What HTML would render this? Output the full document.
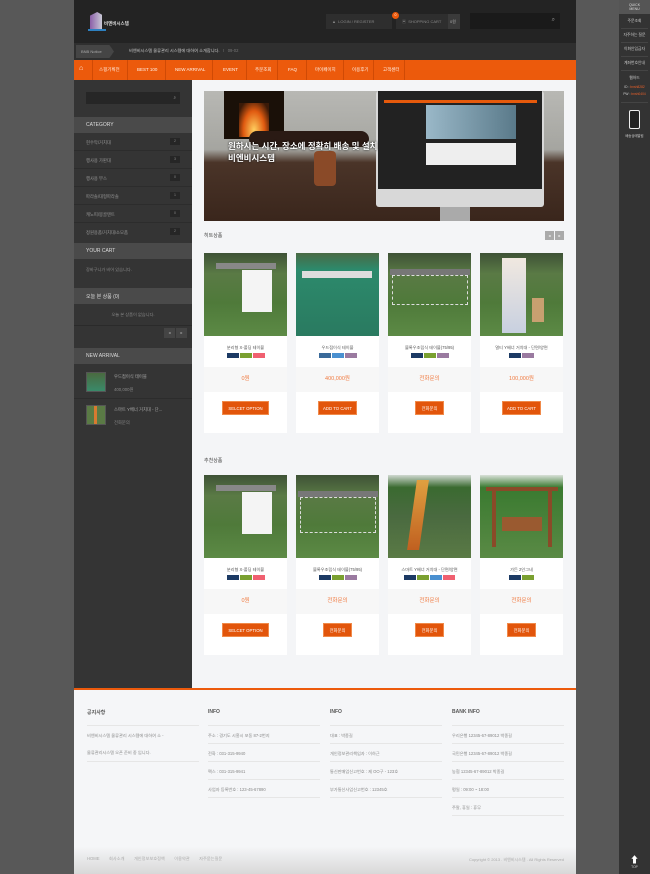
<!DOCTYPE html>
<html><head><meta charset="utf-8"><style>
*{margin:0;padding:0;box-sizing:border-box}
body{width:650px;height:874px;overflow:hidden;background:#585858;font-family:"Liberation Sans","Noto Sans CJK KR",sans-serif;font-size:5px;color:#888;position:relative}
.a{position:absolute}
.wrap{position:absolute;left:74px;top:0;width:502px;height:874px}
.hdr{left:0;top:0;width:502px;height:43px;background:#232323}
.ntc{left:0;top:43px;width:502px;height:17px;background:#2f2f2f}
.nav{left:0;top:60px;width:502px;height:20px;background:#ec5a0c}
.nav span{position:absolute;top:7px;color:#fde;font-size:4.5px;color:#fff3ea}
.nav i{position:absolute;top:0;width:1px;height:20px;background:#d04a05}
.side{left:0;top:80px;width:118px;height:608px;background:#343434}
.main{left:118px;top:80px;width:384px;height:608px;background:#f4f5f7}
.sh{position:absolute;left:0;width:118px;height:16px;background:#4a4a4a;color:#ddd;font-size:5px;padding:5px 0 0 12px}
.ci{position:absolute;left:0;width:118px;height:18px;border-bottom:1px solid #2c2c2c;color:#999;font-size:4.3px;padding:7px 0 0 12px}
.ci b{position:absolute;right:12px;top:5px;width:10px;height:7px;background:#262626;color:#888;font-size:3.5px;text-align:center;line-height:7px;font-weight:normal}
.card{position:absolute;width:83px;background:#fff;height:180px}
.img{position:absolute;left:0;top:0;width:83px;height:83px;background:linear-gradient(#3e5236 0,#5a7a45 25%,#4f7a3a 60%,#5c8a45 100%)}
.nm{position:absolute;top:92px;width:83px;text-align:center;color:#555;font-size:4.2px}
.bd{position:absolute;top:100px;width:83px;text-align:center;font-size:0}
.bd s{display:inline-block;width:12px;height:5px;margin:0 .5px;text-decoration:none}
.pr{position:absolute;top:114px;width:83px;height:25px;background:#f7f7f7;text-align:center;color:#f07a40;font-size:5.5px;line-height:25px}
.bt{position:absolute;top:148px;height:14px;background:#e2550b;color:#fff;font-size:4.3px;text-align:center;line-height:14px;border:1px solid #f08a4a}
.ft{left:0;top:688px;width:502px;height:186px;background:linear-gradient(#f5f6f8 0,#f5f6f8 85%,#d8d8d8 100%);border-top:2px solid #ec5a0c}
.fc{position:absolute;top:0;width:112px}
.fc h4{position:absolute;top:19px;font-size:5px;color:#555;font-weight:bold}
.fc p{position:absolute;left:0;width:112px;height:18px;border-top:1px solid #e6e6e6;font-size:4.2px;color:#888;padding-top:7px}
.qm{left:619px;top:0;width:31px;height:874px;background:#333}
.qm div{position:absolute;left:0;width:31px;text-align:center;font-size:3.8px;color:#ccc}
.ql{position:absolute;left:2px;width:27px;height:1px;background:#444}
</style></head><body>
<div class="wrap">
<div class="a hdr">
 <div class="a" style="left:16px;top:12px;width:12px;height:18px;background:linear-gradient(90deg,#8b5fa8,#c9c9d6);clip-path:polygon(0 20%,60% 0,100% 15%,100% 100%,0 100%)"></div>
 <div class="a" style="left:14px;top:29px;width:18px;height:2px;background:#2d80c0"></div>
 <div class="a" style="left:30px;top:21px;color:#ddd;font-size:4.5px;font-weight:bold">비엔비시스템</div>
 <div class="a" style="left:252px;top:14px;width:66px;height:15px;background:#2e2e2e;color:#888;font-size:4px;padding:5px 0 0 6px">▲&nbsp; LOGIN / REGISTER</div>
 <div class="a" style="left:322px;top:14px;width:52px;height:15px;background:#2e2e2e;color:#888;font-size:4px;padding:5px 0 0 6px">▣&nbsp; SHOPPING CART</div>
 <div class="a" style="left:374px;top:14px;width:12px;height:15px;background:#3a3a3a;color:#aaa;font-size:4px;padding:5px 0 0 2px">0원</div>
 <div class="a" style="left:318px;top:12px;width:7px;height:7px;border-radius:50%;background:#ec5a0c;color:#fff;font-size:3.5px;text-align:center;line-height:7px">0</div>
 <div class="a" style="left:396px;top:13px;width:90px;height:16px;background:#1a1a1a;color:#999;font-size:6px;text-align:right;padding:4px 5px 0 0">⌕</div>
</div>
<div class="a ntc">
 <div class="a" style="left:2px;top:2px;width:38px;height:13px;background:#454545;color:#aaa;font-size:4px;padding:4px 0 0 5px;clip-path:polygon(0 0,88% 0,100% 50%,88% 100%,0 100%)">BNB Notice</div>
 <div class="a" style="left:55px;top:5px;color:#ccc;font-size:4.2px">비엔비시스템 물류관리 시스템에 대하여 소개합니다. &nbsp; <span style="color:#777">I &nbsp; 09-02</span></div>
</div>
<div class="a nav">
 <span style="left:5px;top:5px;font-size:7px">⌂</span><i style="left:18px"></i>
 <span style="left:25px">스핑기획전</span><i style="left:53px"></i>
 <span style="left:63px">BEST 100</span><i style="left:91px"></i>
 <span style="left:101px">NEW ARRIVAL</span><i style="left:138px"></i>
 <span style="left:149px">EVENT</span><i style="left:172px"></i>
 <span style="left:181px">주문조회</span><i style="left:203px"></i>
 <span style="left:214px">FAQ</span><i style="left:232px"></i>
 <span style="left:241px">마이페이지</span><i style="left:269px"></i>
 <span style="left:278px">이용후기</span><i style="left:299px"></i>
 <span style="left:309px">고객센터</span><i style="left:330px"></i>
</div>
<div class="a side">
 <div class="a" style="left:12px;top:12px;width:94px;height:12px;background:#262626;color:#999;font-size:4.5px;text-align:right;padding:3px 4px 0 0">⌕</div>
 <div class="sh" style="top:37px">CATEGORY</div>
 <div class="ci" style="top:53px">현수막/거치대<b>2</b></div>
 <div class="ci" style="top:71px">행사용 가판대<b>3</b></div>
 <div class="ci" style="top:89px">행사용 부스<b>0</b></div>
 <div class="ci" style="top:107px">파라솔/대형파라솔<b>1</b></div>
 <div class="ci" style="top:125px">캐노피/몽골텐트<b>0</b></div>
 <div class="ci" style="top:143px;border:none">정원용품/거치대/소모품<b>2</b></div>
 <div class="sh" style="top:163px">YOUR CART</div>
 <div class="a" style="left:12px;top:187px;font-size:4.2px;color:#888">장바구니가 비어 있습니다.</div>
 <div class="sh" style="top:208px">오늘 본 상품 (0)</div>
 <div class="a" style="left:0;top:232px;width:118px;text-align:center;font-size:4.2px;color:#888">오늘 본 상품이 없습니다.</div>
 <div class="a" style="left:0;top:245px;width:118px;height:1px;background:#2a2a2a"></div>
 <div class="a" style="left:90px;top:248px;width:11px;height:10px;background:#444;color:#aaa;font-size:4px;text-align:center;line-height:10px">◂</div>
 <div class="a" style="left:102px;top:248px;width:11px;height:10px;background:#444;color:#aaa;font-size:4px;text-align:center;line-height:10px">▸</div>
 <div class="sh" style="top:268px">NEW ARRIVAL</div>
 <div class="a" style="left:12px;top:292px;width:20px;height:20px;background:linear-gradient(#4a6a40,#3a8a6a);border:1px solid #555"></div>
 <div class="a" style="left:40px;top:294px;font-size:4.3px;color:#aaa">우드접이식 테이블</div>
 <div class="a" style="left:40px;top:307px;font-size:4.3px;color:#888">400,000원</div>
 <div class="a" style="left:0;top:318px;width:118px;height:1px;background:#2c2c2c"></div>
 <div class="a" style="left:12px;top:325px;width:20px;height:20px;background:linear-gradient(90deg,#5a7a45 40%,#d87a30 40%,#d87a30 55%,#5a7a45 55%);border:1px solid #555"></div>
 <div class="a" style="left:40px;top:327px;font-size:4.3px;color:#aaa">스마트 Y배너 거치대 - 단...</div>
 <div class="a" style="left:40px;top:340px;font-size:4.3px;color:#888">전화문의</div>
</div>
<div class="a main">
 <div class="a" style="left:12px;top:11px;width:360px;height:130px;background:linear-gradient(180deg,#b8b8b4 0,#a5a5a0 45%,#4a3428 55%,#3a261c 100%);overflow:hidden">
  <div class="a" style="left:20px;top:0;width:60px;height:48px;background:#1a1008"></div>
  <div class="a" style="left:35px;top:12px;width:30px;height:34px;background:radial-gradient(ellipse at 50% 80%,#ffd060,#e05a10 50%,#3a1a08 85%)"></div>
  <div class="a" style="left:45px;top:40px;width:120px;height:16px;border-radius:8px;background:#2a1a14"></div>
  <div class="a" style="left:110px;top:60px;width:22px;height:35px;background:#8a4a28;border-radius:4px"></div>
  <div class="a" style="left:172px;top:0;width:168px;height:116px;background:#d8d8d8;border-radius:3px"></div>
  <div class="a" style="left:174px;top:0;width:164px;height:98px;background:#222"></div>
  <div class="a" style="left:180px;top:9px;width:153px;height:3px;background:#e65a0c"></div>
  <div class="a" style="left:222px;top:14px;width:90px;height:34px;background:linear-gradient(90deg,#9ab8c8,#5a7a8a)"></div>
  <div class="a" style="left:222px;top:52px;width:90px;height:22px;background:#eee"></div>
  <div class="a" style="left:236px;top:116px;width:30px;height:14px;background:#aaa"></div>
  <div class="a" style="left:24px;top:49px;color:#fff;font-size:8.5px;line-height:12px;font-weight:bold;text-shadow:0 0 2px #000">원하시는 시간, 장소에 정확히 배송 및 설치<br>비엔비시스템</div>
 </div>
 <div class="a" style="left:12px;top:152px;font-size:5px;color:#444">히트상품</div>
 <div class="a" style="left:353px;top:151px;width:9px;height:9px;background:#aaa;color:#fff;font-size:4px;text-align:center;line-height:9px">◂</div>
 <div class="a" style="left:363px;top:151px;width:9px;height:9px;background:#aaa;color:#fff;font-size:4px;text-align:center;line-height:9px">▸</div>

 <div class="card" style="left:12px;top:173px"><div class="img"><div class="a" style="left:12px;top:10px;width:60px;height:6px;background:#888"></div><div class="a" style="left:38px;top:17px;width:30px;height:42px;background:#f4f4f4"></div></div>
  <div class="nm">분리형 X-폴딩 테이블</div><div class="bd"><s style="background:#1c3a64"></s><s style="background:#7aa030"></s><s style="background:#f06070"></s></div><div class="pr">0원</div><div class="bt" style="left:18px;width:47px">SELCET OPTION</div></div>
 <div class="card" style="left:104px;top:173px"><div class="img" style="background:linear-gradient(#4a6a45 0,#2c8a6c 20%,#2a7a60 100%)"><div class="a" style="left:6px;top:18px;width:70px;height:7px;background:#ddd"></div></div>
  <div class="nm">우드접이식 테이블</div><div class="bd"><s style="background:#3a6a9a"></s><s style="background:#4a90d0"></s><s style="background:#9a7aa0"></s></div><div class="pr">400,000원</div><div class="bt" style="left:22px;width:39px">ADD TO CART</div></div>
 <div class="card" style="left:196px;top:173px"><div class="img"><div class="a" style="left:2px;top:16px;width:80px;height:6px;background:#777"></div><div class="a" style="left:4px;top:22px;width:76px;height:30px;border:1px dashed #ddd"></div></div>
  <div class="nm">블록우조립식 테이블(75/95)</div><div class="bd"><s style="background:#1c3a64"></s><s style="background:#7aa030"></s><s style="background:#9a7aa0"></s></div><div class="pr">전화문의</div><div class="bt" style="left:27px;width:29px">전화문의</div></div>
 <div class="card" style="left:288px;top:173px"><div class="img"><div class="a" style="left:22px;top:5px;width:24px;height:75px;background:linear-gradient(#f0e8e0,#c8d0e0)"></div><div class="a" style="left:52px;top:45px;width:12px;height:24px;background:#c8a070"></div></div>
  <div class="nm">멀티 Y배너 거치대 - 단면/양면</div><div class="bd"><s style="background:#1c3a64"></s><s style="background:#9a7aa0"></s></div><div class="pr">100,000원</div><div class="bt" style="left:22px;width:39px">ADD TO CART</div></div>

 <div class="a" style="left:12px;top:377px;font-size:5px;color:#444">추천상품</div>
 <div class="card" style="left:12px;top:395px"><div class="img"><div class="a" style="left:12px;top:10px;width:60px;height:6px;background:#888"></div><div class="a" style="left:38px;top:17px;width:30px;height:42px;background:#f4f4f4"></div></div>
  <div class="nm">분리형 X-폴딩 테이블</div><div class="bd"><s style="background:#1c3a64"></s><s style="background:#7aa030"></s><s style="background:#f06070"></s></div><div class="pr">0원</div><div class="bt" style="left:18px;width:47px">SELCET OPTION</div></div>
 <div class="card" style="left:104px;top:395px"><div class="img"><div class="a" style="left:2px;top:16px;width:80px;height:6px;background:#777"></div><div class="a" style="left:4px;top:22px;width:76px;height:36px;border:1px dashed #ddd"></div></div>
  <div class="nm">블록우조립식 테이블(75/95)</div><div class="bd"><s style="background:#1c3a64"></s><s style="background:#7aa030"></s><s style="background:#9a7aa0"></s></div><div class="pr">전화문의</div><div class="bt" style="left:27px;width:29px">전화문의</div></div>
 <div class="card" style="left:196px;top:395px"><div class="img" style="background:linear-gradient(#cfd8d0 0,#3a6a30 15%,#4a6a40 50%,#5a7a45 100%)"><div class="a" style="left:24px;top:5px;width:12px;height:70px;background:linear-gradient(#e0a040,#c06020);transform:skewX(-8deg)"></div></div>
  <div class="nm">스마트 Y배너 거치대 - 단면/양면</div><div class="bd"><s style="background:#1c3a64"></s><s style="background:#7aa030"></s><s style="background:#4a90d0"></s><s style="background:#f06070"></s></div><div class="pr">전화문의</div><div class="bt" style="left:27px;width:29px">전화문의</div></div>
 <div class="card" style="left:288px;top:395px"><div class="img" style="background:linear-gradient(#d8e0d8 0,#3a7a30 15%,#5a8a45 100%)"><div class="a" style="left:6px;top:12px;width:72px;height:4px;background:#8a4a28"></div><div class="a" style="left:12px;top:14px;width:4px;height:58px;background:#8a4a28"></div><div class="a" style="left:68px;top:14px;width:4px;height:58px;background:#8a4a28"></div><div class="a" style="left:22px;top:42px;width:40px;height:14px;background:#9a5a30"></div></div>
  <div class="nm">가든 2인그네</div><div class="bd"><s style="background:#1c3a64"></s><s style="background:#7aa030"></s></div><div class="pr">전화문의</div><div class="bt" style="left:27px;width:29px">전화문의</div></div>
</div>
<div class="a ft">
 <div class="fc" style="left:13px"><h4>공지사항</h4><p style="top:35px;border-top:1px solid #e6e6e6">비엔비시스템 물류관리 시스템에 대하여 소 -</p><p style="top:53px;border-top:none">물류관리시스템 오픈 준비 중 입니다.</p><p style="top:71px;height:1px"></p></div>
 <div class="fc" style="left:134px"><h4>INFO</h4><p style="top:35px">주소 : 경기도 시흥시 포동 87-2번지</p><p style="top:53px">전화 : 031-315-9940</p><p style="top:71px">팩스 : 031-315-9941</p><p style="top:89px">사업자 등록번호 : 123-45-67890</p><p style="top:107px;height:1px"></p></div>
 <div class="fc" style="left:256px"><h4>INFO</h4><p style="top:35px">대표 : 박종길</p><p style="top:53px">개인정보관리책임자 : 이하근</p><p style="top:71px">통신판매업신고번호 : 제 OO구 - 123호</p><p style="top:89px">부가통신사업신고번호 : 12345호</p><p style="top:107px;height:1px"></p></div>
 <div class="fc" style="left:378px"><h4>BANK INFO</h4><p style="top:35px">우리은행 12345-67-89012 박종길</p><p style="top:53px">국민은행 12345-67-89012 박종길</p><p style="top:71px">농협 12345-67-89012 박종길</p><p style="top:89px">평일 : 09:00 ~ 18:00</p><p style="top:107px">주말, 휴일 : 휴무</p><p style="top:125px;height:1px"></p></div>
 <div class="a" style="left:13px;top:166px;font-size:4.2px;color:#aaa;word-spacing:2px">HOME &nbsp; 회사소개 &nbsp; 개인정보보호정책 &nbsp; 이용약관 &nbsp; 자주묻는질문</div>
 <div class="a" style="right:12px;top:167px;font-size:4px;color:#aaa">Copyright © 2013 . 비엔비시스템 . All Rights Reserved</div>
</div>
</div>
<div class="a qm">
 <div style="top:0;height:14px;background:#555;color:#ddd;font-size:3.5px;line-height:4px;padding-top:3px">QUICK<br>MENU</div>
 <div style="top:19px">주문조회</div><i class="ql" style="top:28px"></i>
 <div style="top:33px">자주하는 질문</div><i class="ql" style="top:42px"></i>
 <div style="top:47px">이화안입금자</div><i class="ql" style="top:56px"></i>
 <div style="top:61px">계좌번호안내</div><i class="ql" style="top:70px"></i>
 <div style="top:76px">웹하드</div>
 <div style="top:85px;font-size:3.3px">ID : <span style="color:#e8602a">bnsh8282</span></div>
 <div style="top:92px;font-size:3.3px">PW : <span style="color:#e8602a">bnsh0404</span></div>
 <i class="ql" style="top:102px"></i>
 <div style="top:110px;left:10px;width:11px;height:19px;border:1.5px solid #eee;border-radius:2px;background:#222"></div>
 <div style="top:133px;font-size:3.3px">배송상태알림</div>
 <div style="top:853px;font-size:9px;color:#fff">⬆</div>
 <div style="top:865px;font-size:3.3px">TOP</div>
</div>
</body></html>
